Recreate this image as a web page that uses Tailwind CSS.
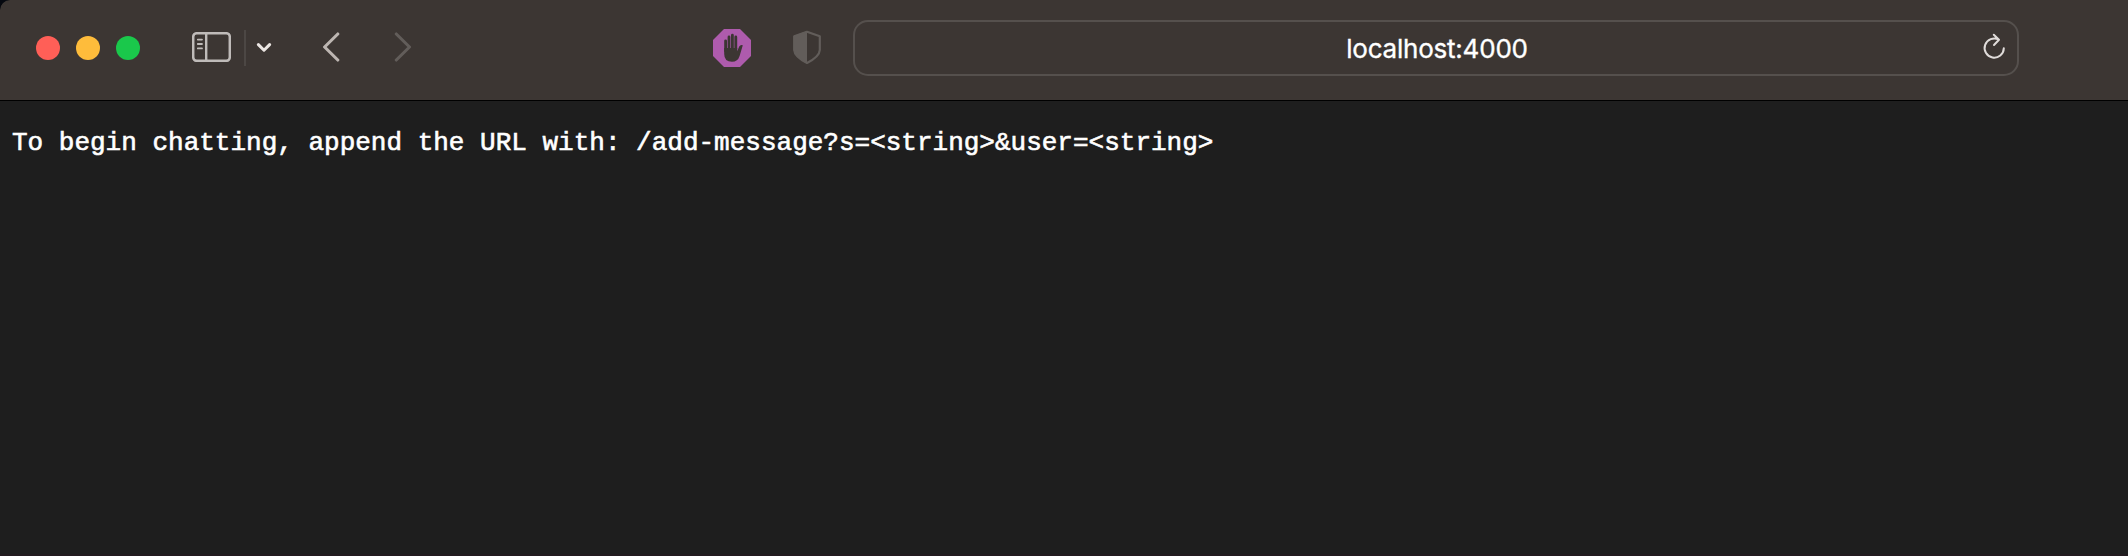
<!DOCTYPE html>
<html lang="en">
<head>
<meta charset="utf-8">
<title>localhost:4000</title>
<script src="https://cdn.jsdelivr.net/npm/@tailwindcss/browser@4"></script>
</head>
<body class="bg-[#05080f]">
<div class="flex h-[556px] w-[2128px] flex-col overflow-hidden rounded-tl-[10px] bg-[#1e1e1e]">
  <header class="flex h-[101px] shrink-0 items-start rounded-tl-[10px] border-b border-black bg-[#3c3633]">
    <div class="ml-9 mt-9 flex gap-4">
      <span class="size-6 rounded-full bg-[#ff5f57]"></span>
      <span class="size-6 rounded-full bg-[#febc3b]"></span>
      <span class="size-6 rounded-full bg-[#1ac84b]"></span>
    </div>
    <svg class="ml-[52px] mt-8 h-[30px] w-[39px]" viewBox="192 32 39 30" fill="none" stroke="#bfbbb9" stroke-linecap="round">
      <rect x="193.2" y="33.2" width="36.6" height="27.6" rx="3.5" stroke-width="2.5"/>
      <path d="M206.2 33V61" stroke-width="2.4"/>
      <path d="M197.8 39.6h4.2M197.8 44h4.2M197.8 48.4h4.2" stroke-width="1.8"/>
    </svg>
    <div class="ml-[13px] mt-[30px] h-9 w-[2px] bg-[#4c4744]"></div>
    <svg class="ml-2.5 mt-[40px] h-3 w-4" viewBox="256 40 16 12" fill="none" stroke="#ebe6e3" stroke-width="3" stroke-linecap="round" stroke-linejoin="round"><path d="M258.4 44.6L264 50.2L269.6 44.6"/></svg>
    <svg class="ml-[50px] mt-8 h-[30px] w-[18px]" viewBox="322 32 18 30" fill="none" stroke="#bdb6b2" stroke-width="3.1" stroke-linecap="round" stroke-linejoin="round"><path d="M337.8 34L324.6 47L337.8 60"/></svg>
    <svg class="ml-[53px] mt-8 h-[30px] w-[19px]" viewBox="393 32 19 30" fill="none" stroke="#625d5a" stroke-width="3.1" stroke-linecap="round" stroke-linejoin="round"><path d="M396.3 34L409.5 47L396.3 60"/></svg>
    <svg class="ml-[301px] mt-[29px] size-[38px]" viewBox="0 0 38 38">
      <path d="M11 0H27L38 11V27L27 38H11L0 27V11Z" fill="#ae5bad"/>
      <g stroke="#3c3633" stroke-width="2.8" stroke-linecap="round" fill="none"><path d="M12.6 11.8V22M16 8V20M19.4 6.2V20M22.8 8V20"/></g>
      <path d="M11.2 19H24.2V22.2L26.2 17.6Q27.4 15.2 29.8 16.2L26.6 27Q24.8 32.8 19 32.8Q11.2 32.8 11.2 25Z" fill="#3c3633"/>
    </svg>
    <svg class="ml-[42px] mt-[30px] h-[35px] w-[28px]" viewBox="0 0 28 35">
      <path d="M14 1.8L1.2 6.3V20Q1.5 26.6 14 33Q26.5 26.6 26.8 20V6.3Z" fill="none" stroke="#625d5a" stroke-width="2.2" stroke-linejoin="round"/>
      <path d="M14 1L.6 6V20Q1 27 14 33.8Z" fill="#625d5a"/>
    </svg>
    <div class="ml-[32px] mt-5 flex h-14 w-[1166px] items-center rounded-[15px] border-2 border-[#55504d] bg-[#3c3633]">
      <div class="ml-[37px] flex-1 pt-0.5 text-center font-['Inter','Liberation_Sans',sans-serif] text-[26px] leading-[30px] tracking-[-0.22px] text-white [-webkit-text-stroke:0.35px_white]">localhost:4000</div>
      <svg class="mr-[11px] h-8 w-6" viewBox="1982 32 24 32" fill="none" stroke="#e0dcda" stroke-width="2" stroke-linecap="round" stroke-linejoin="round"><path d="M2003.8 48.2A9.6 9.6 0 1 1 1998.8 39.6M1993.8 34.8L1999 39.8L1994 45"/></svg>
    </div>
  </header>
  <main class="flex-1 border-b-2 border-[#221b1f] bg-[#1e1e1e] px-3 pt-[27px]">
    <pre class="font-['Liberation_Mono',monospace] text-[26px] leading-[30px] text-white [-webkit-text-stroke:0.6px_white]">To begin chatting, append the URL with: /add-message?s=&lt;string&gt;&amp;user=&lt;string&gt;</pre>
  </main>
</div>
</body>
</html>
